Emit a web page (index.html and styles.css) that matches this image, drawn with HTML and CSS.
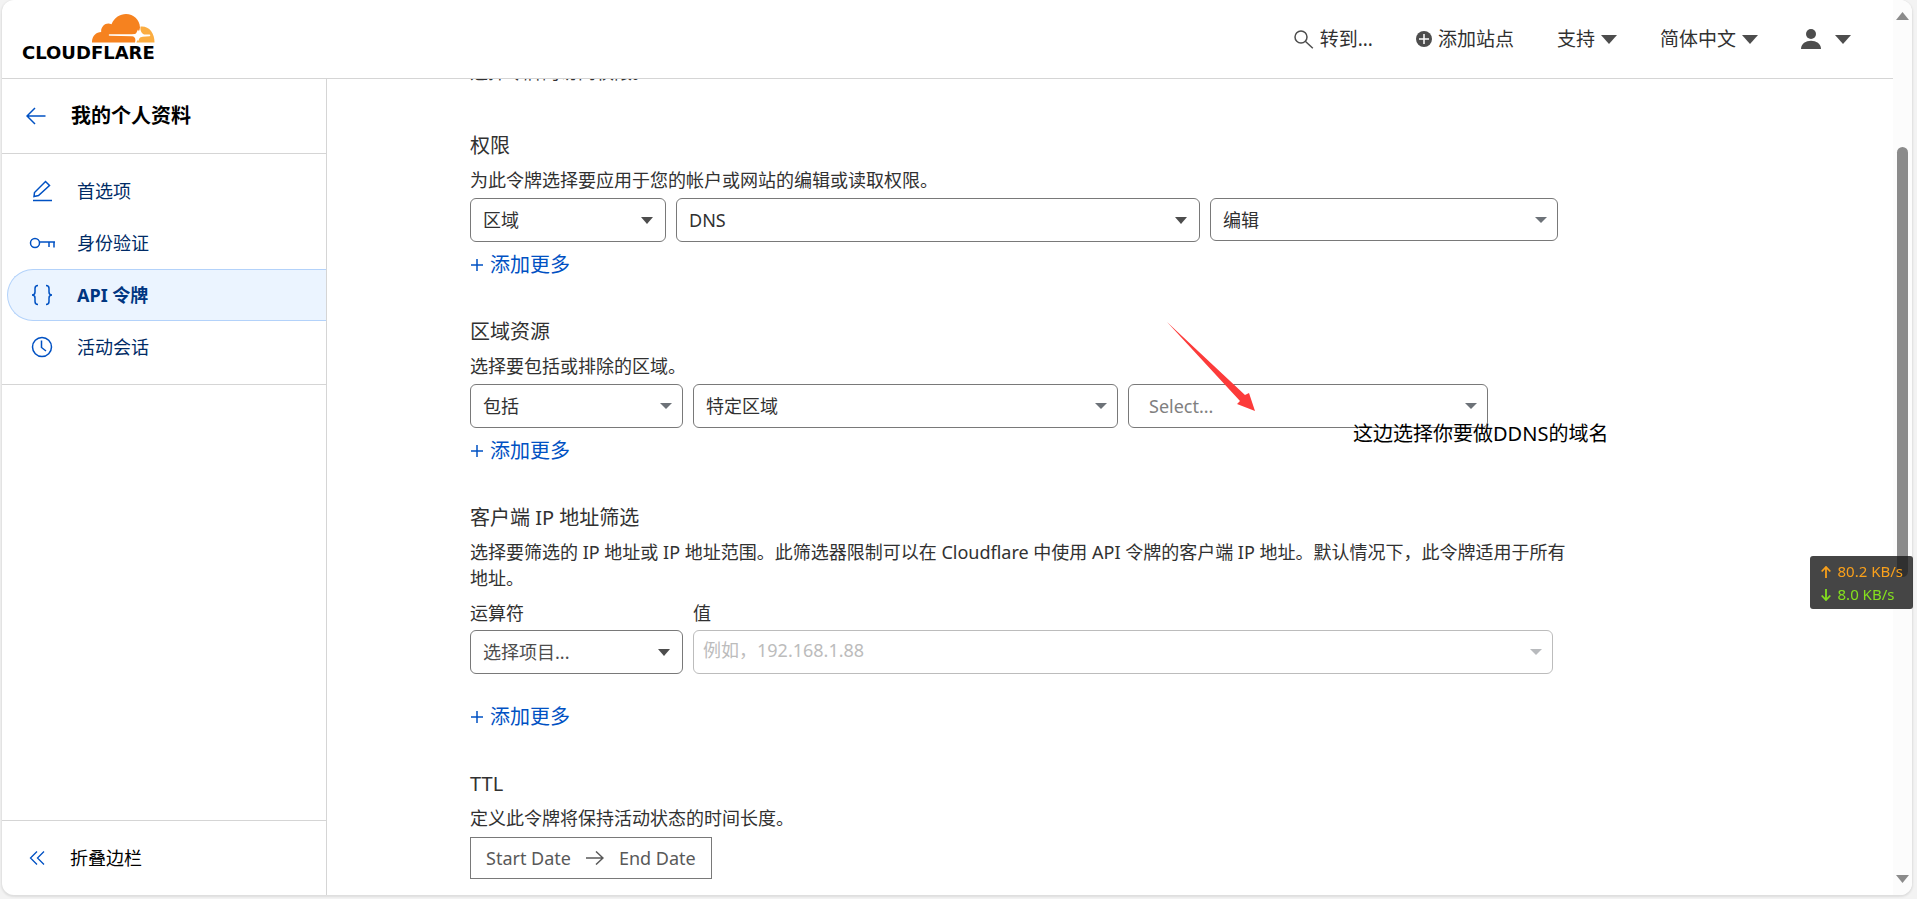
FILE: index.html
```html
<!DOCTYPE html>
<html lang="zh-CN">
<head>
<meta charset="utf-8">
<title>API 令牌 | Cloudflare</title>
<link rel="stylesheet" href="styles.css">
</head>
<body>
<div class="window">
  <div class="app">
    <header class="topbar">
      <a class="logo" href="#" aria-label="Cloudflare">
        <svg class="logo-cloud" viewBox="0 0 63 29" width="63" height="29" aria-hidden="true">
          <path fill="#f6821f" d="M0 28.5C-.2 22 4 18.2 9.200 18C8.500 12.500 14 7.500 19.500 10.200C22.500 3.500 28 0 34 0C41.500 0 47.500 5.500 48 13.500C47.500 17 46 19.500 43.500 20.200H17.500C16.500 20.200 16.500 21.800 17.500 21.800L40 22.200C43 22.400 44 25 43 28.500Z"/>
          <path fill="#fbad41" d="M48.500 12.500C56.500 11.500 62.800 18.500 62.500 28.500H44.500C45 25.500 47 23.200 50.500 22.800L57.500 22.300C58.500 22 58.500 20.500 57.500 20.400H52C49.500 19.500 48 16.500 48.500 12.500Z"/>
          <path fill="#fff" d="M46 15.500L48 19.500L53 21.300L48 23L46 27.500L44 23L39 21.300L44 19.500Z"/>
        </svg>
        <span class="wordmark">CLOUDFLARE</span>
      </a>
      <nav class="topnav" aria-label="账户">
        <button class="top-item" type="button">
          <svg viewBox="0 0 20 20" width="20" height="20" fill="none" stroke="#4d4d4d" stroke-width="1.500" aria-hidden="true"><circle cx="7" cy="8" r="6"/><path d="M11.300 12.300L18.800 19.200"/></svg>
          转到...
        </button>
        <button class="top-item" type="button">
          <svg viewBox="0 0 16 16" width="16" height="16" aria-hidden="true"><circle cx="8" cy="8" r="8" fill="#4d4d4d"/><path d="M8 3V13M3 8H13" stroke="#fff" stroke-width="1.500"/></svg>
          添加站点
        </button>
        <button class="top-item" type="button">支持
          <svg viewBox="0 0 16 9" width="16" height="9" aria-hidden="true"><path fill="#4d4d4d" d="M0 0H16L8 9Z"/></svg>
        </button>
        <button class="top-item" type="button">简体中文
          <svg viewBox="0 0 16 9" width="16" height="9" aria-hidden="true"><path fill="#4d4d4d" d="M0 0H16L8 9Z"/></svg>
        </button>
        <button class="top-item user" type="button" aria-label="用户">
          <svg viewBox="0 0 20 20" width="20" height="20" fill="#4d4d4d" aria-hidden="true"><circle cx="10" cy="5" r="5"/><path d="M0 20C0 9 20 9 20 20Z"/></svg>
          <svg viewBox="0 0 16 9" width="16" height="9" aria-hidden="true"><path fill="#4d4d4d" d="M0 0H16L8 9Z"/></svg>
        </button>
      </nav>
    </header>

    <div class="body">
      <aside class="sidebar">
        <div class="side-title">
          <a href="#" aria-label="返回"><svg viewBox="0 0 20 18" width="20" height="18" fill="none" stroke="#0051c3" stroke-width="1.500" aria-hidden="true"><path d="M9 1L1 9L9 17M1 9H19.500"/></svg></a>
          <h1>我的个人资料</h1>
        </div>
        <nav class="side-nav" aria-label="个人资料">
          <a class="side-link" href="#">
            <svg viewBox="0 0 26 22" width="26" height="22" fill="none" stroke="#0051c3" stroke-width="1.500" aria-hidden="true"><path d="M4 20.500H23M5 16.500L5.500 12.500L16.500 1.500L20.500 5.500L9.500 15.500Z"/></svg>
            首选项</a>
          <a class="side-link" href="#">
            <svg viewBox="0 0 26 22" width="26" height="22" fill="none" stroke="#0051c3" stroke-width="1.500" aria-hidden="true"><circle cx="6" cy="11" r="4.500"/><path d="M10.500 10H26M20 10V15M25 10V15.500"/></svg>
            身份验证</a>
          <a class="side-link active" href="#" aria-current="page">
            <svg viewBox="0 0 26 22" width="26" height="22" fill="none" stroke="#0051c3" stroke-width="1.500" aria-hidden="true"><path d="M9 1.500C6.500 1.500 6 2.500 6 4.500V8C6 10 5 11 3 11C5 11 6 12 6 14V17.500C6 19.500 6.500 20.500 9 20.500M17 1.500C19.500 1.500 20 2.500 20 4.500V8C20 10 21 11 23 11C21 11 20 12 20 14V17.500C20 19.500 19.500 20.500 17 20.500"/></svg>
            API 令牌</a>
          <a class="side-link" href="#">
            <svg viewBox="0 0 26 22" width="26" height="22" fill="none" stroke="#0051c3" stroke-width="1.500" aria-hidden="true"><circle cx="13" cy="11" r="9.500"/><path d="M12.500 4.500V11.500L17 15"/></svg>
            活动会话</a>
        </nav>
        <button class="collapse" type="button">
          <svg viewBox="0 0 16 16" width="16" height="16" fill="none" stroke="#0051c3" stroke-width="1.300" aria-hidden="true"><path d="M8 1.500L1.500 8L8 14.500M15 1.500L8.500 8L15 14.500"/></svg>
          折叠边栏
        </button>
      </aside>

      <main class="main">
        <form class="form">
          <p class="intro">选择令牌的访问权限。</p>

          <section class="group">
            <h2>权限</h2>
            <p>为此令牌选择要应用于您的帐户或网站的编辑或读取权限。</p>
            <div class="row permissions">
              <div class="field dark"><select aria-label="权限范围"><option>区域</option></select></div>
              <div class="field dark"><select aria-label="权限资源"><option>DNS</option></select></div>
              <div class="field short"><select aria-label="访问级别"><option>编辑</option></select></div>
            </div>
            <button class="add" type="button"><svg viewBox="0 0 12 12" width="12" height="12" stroke="#0051c3" stroke-width="1.500" aria-hidden="true"><path d="M6 0V12M0 6H12"/></svg>添加更多</button>
          </section>

          <section class="group">
            <h2>区域资源</h2>
            <p>选择要包括或排除的区域。</p>
            <div class="row resources">
              <div class="field"><select aria-label="包括或排除"><option>包括</option></select></div>
              <div class="field"><select aria-label="区域类型"><option>特定区域</option></select></div>
              <div class="field search"><select aria-label="区域"><option>Select...</option></select></div>
            </div>
            <button class="add" type="button"><svg viewBox="0 0 12 12" width="12" height="12" stroke="#0051c3" stroke-width="1.500" aria-hidden="true"><path d="M6 0V12M0 6H12"/></svg>添加更多</button>
            <svg class="pointer" viewBox="0 0 88 89" width="88" height="89" aria-hidden="true"><path fill="#fc3b3a" d="M0 0L78 73L82 71L88 89L70 82L73 79Z"/></svg>
            <div class="note">这边选择你要做DDNS的域名</div>
          </section>

          <section class="group">
            <h2>客户端 IP 地址筛选</h2>
            <p>选择要筛选的 IP 地址或 IP 地址范围。此筛选器限制可以在 Cloudflare 中使用 API 令牌的客户端 IP 地址。默认情况下，此令牌适用于所有<br>地址。</p>
            <div class="row addresses">
              <div class="labelled"><label for="operator">运算符</label>
                <div class="field dark empty"><select id="operator"><option>选择项目...</option></select></div></div>
              <div class="labelled"><label for="value">值</label>
                <div class="field disabled"><input id="value" type="text" placeholder="例如，192.168.1.88" disabled></div></div>
            </div>
            <button class="add spaced" type="button"><svg viewBox="0 0 12 12" width="12" height="12" stroke="#0051c3" stroke-width="1.500" aria-hidden="true"><path d="M6 0V12M0 6H12"/></svg>添加更多</button>
          </section>

          <section class="group">
            <h2>TTL</h2>
            <p>定义此令牌将保持活动状态的时间长度。</p>
            <button class="dates" type="button">
              <span>Start Date</span>
              <svg viewBox="0 0 18 14" width="18" height="14" fill="none" stroke="#595959" stroke-width="1.500" aria-hidden="true"><path d="M0 7H17M10 .5L17 7L10 13.500"/></svg>
              <span>End Date</span>
            </button>
          </section>
        </form>
      </main>
    </div>
  </div>

  <div class="scrollbar" aria-hidden="true">
    <svg viewBox="0 0 13 8" width="13" height="8"><path fill="#8b8b8b" d="M6.500 0L13 8H0Z"/></svg>
    <div class="track"><div class="thumb"></div></div>
    <svg viewBox="0 0 13 8" width="13" height="8"><path fill="#8b8b8b" d="M6.500 8L0 0H13Z"/></svg>
  </div>
</div>

<div class="netspeed">
  <div class="up"><svg viewBox="0 0 10 12" width="10" height="12" fill="none" stroke="currentColor" stroke-width="1.800" aria-hidden="true"><path d="M5 12V1M.7 5.500L5 1L9.300 5.500"/></svg>80.2 KB/s</div>
  <div class="down"><svg viewBox="0 0 10 12" width="10" height="12" fill="none" stroke="currentColor" stroke-width="1.800" aria-hidden="true"><path d="M5 0V11M.7 6.500L5 11L9.300 6.500"/></svg>8.0 KB/s</div>
</div>
</body>
</html>
```
FILE: styles.css
```css
* { box-sizing: border-box; }
body {
  margin: 0;
  height: 100vh;
  padding: 0 5px 4px 2px;
  background: #f3f3f3;
  color: #313131;
  font: 18px/26px "Noto Sans", "Noto Sans CJK SC", sans-serif;
}
h1, h2, p { margin: 0; }
a { color: inherit; text-decoration: none; }
button {
  border: 0;
  padding: 0;
  background: none;
  color: inherit;
  font: inherit;
}
svg { display: block; flex: none; }

.window {
  height: 100%;
  display: flex;
  overflow: hidden;
  background: #fff;
  border-radius: 12px;
  box-shadow: 0 1px 2px 1px #dedede;
}
.app { flex: 1; min-width: 0; display: flex; flex-direction: column; }

.topbar {
  flex: none;
  height: 79px;
  display: flex;
  justify-content: space-between;
  align-items: center;
  padding: 0 42px 0 20px;
  border-bottom: 1px solid #d5d5d5;
}
.logo { display: flex; flex-direction: column; align-items: flex-end; padding-bottom: 4px; gap: 2px; }
.wordmark {
  color: #000;
  font: bold 18px/16px "DejaVu Sans", sans-serif;
}
.topnav { display: flex; gap: 43px; }
.top-item { display: flex; align-items: center; gap: 6px; font-size: 19px; }
.top-item.user { gap: 14px; }

.body { flex: 1; min-height: 0; display: flex; }
.sidebar {
  flex: none;
  width: 325px;
  display: flex;
  flex-direction: column;
  border-right: 1px solid #d5d5d5;
}
.side-title {
  height: 75px;
  display: flex;
  align-items: center;
  gap: 25px;
  padding: 0 24px;
  border-bottom: 1px solid #d5d5d5;
}
.side-title h1 { font-size: 20px; font-weight: 700; color: #000; }
.side-nav { padding: 11px 0; border-bottom: 1px solid #d5d5d5; }
.side-link {
  height: 52px;
  display: flex;
  align-items: center;
  gap: 22px;
  margin-left: 5px;
  padding-left: 21px;
  border: 1px solid transparent;
  border-right: 0;
  border-radius: 26px 0 0 26px;
  color: #002b66;
}
.side-link.active {
  background: #ebf4ff;
  border-color: #b3d2fa;
  color: #003681;
  font-weight: 700;
}
.collapse {
  height: 75px;
  display: flex;
  align-items: center;
  gap: 25px;
  margin-top: auto;
  padding: 0 27px;
  border-top: 1px solid #d5d5d5;
  color: #000;
}

.main { flex: 1; min-width: 0; overflow: hidden; padding: 0 24px 0 143px; }
.form { max-width: 1088px; }
.intro { margin: -20px 0 48px; }
.group { position: relative; margin-bottom: 41px; }
.group h2 { margin-bottom: 8px; font-size: 20px; line-height: 26px; font-weight: 400; }
.group p { margin-bottom: 5px; white-space: nowrap; }

.row { display: grid; gap: 10px; align-items: start; }
.permissions { grid-template-columns: 196fr 524fr 348fr; }
.resources { grid-template-columns: 213fr 425fr 360fr; margin-right: 70px; }
.addresses { grid-template-columns: 213fr 860fr; margin: 9px 5px 0 0; }
.labelled { display: grid; gap: 4px; }

.field { position: relative; height: 44px; }
.field.short { height: 43px; }
.field::after {
  content: "";
  position: absolute;
  right: 11px;
  top: 19px;
  border: 6px solid transparent;
  border-top-color: #6d7278;
  border-bottom: 0;
  pointer-events: none;
}
.field.dark::after { right: 13px; border-top: 7px solid #4d4d4d; }
.field select, .field input {
  appearance: none;
  width: 100%;
  height: 100%;
  margin: 0;
  padding: 0 12px;
  border: 1px solid #797979;
  border-radius: 6px;
  background: #fff;
  color: #313131;
  font: inherit;
}
.field.search select { padding-left: 20px; color: #808080; }
.field.empty select { color: #4d4d4d; }
.field.disabled input { padding: 0 9px 4px; border-color: #bcbcbc; }
.field.disabled::after { border-top-color: #b8babd; }
.field input::placeholder { color: #bcbcbc; opacity: 1; }

.add {
  display: flex;
  align-items: center;
  gap: 7px;
  margin-top: 10px;
  padding-left: 1px;
  color: #0051c3;
  font-size: 20px;
  line-height: 26px;
}
.add.spaced { margin-top: 30px; }

.dates {
  height: 42px;
  display: flex;
  align-items: center;
  gap: 15px;
  padding: 0 15px;
  margin-top: 6px;
  border: 1px solid #797979;
  color: #595959;
}

/* Annotation drawn over the zone fields */
.pointer { position: absolute; left: 697px; top: 3px; pointer-events: none; }
.note {
  position: absolute;
  left: 883px;
  top: 102px;
  color: #000;
  font-size: 20px;
  white-space: nowrap;
}

.scrollbar {
  flex: none;
  width: 19px;
  display: flex;
  flex-direction: column;
  align-items: center;
  padding: 12px 0;
  background: #fcfcfc;
}
.track { flex: 1; display: flex; flex-direction: column; padding-top: 127px; }
.thumb { width: 11px; height: 59%; border-radius: 6px; background: #8b8b8b; }

.netspeed {
  position: fixed;
  right: 4px;
  top: 556px;
  padding: 4px 10px 3px 11px;
  border-radius: 3px;
  background: rgba(28, 28, 28, 0.82);
  font-size: 15px;
  line-height: 23px;
  white-space: nowrap;
}
.netspeed div { display: flex; align-items: center; gap: 7px; }
.up { color: #f9a01b; }
.down { color: #84e01e; }
```
